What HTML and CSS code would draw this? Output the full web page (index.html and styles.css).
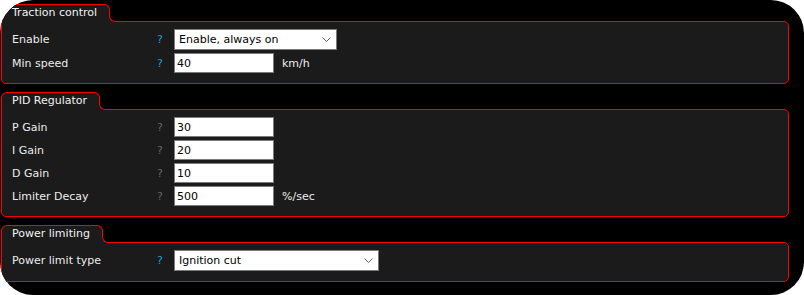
FILE: index.html
```html
<!DOCTYPE html>
<html lang="en">
<head>
  <meta charset="UTF-8">
  <title>Traction control settings</title>
  <link rel="stylesheet" href="styles.css">
</head>
<body>

<div class="frame">

  <div class="panel">
    <div class="panel-tab">Traction control</div>
    <div class="panel-body">
      <div class="row">
        <span class="label">Enable</span>
        <span class="help">?</span>
        <div class="select select-short">
          <span>Enable, always on</span>
          <svg class="chevron" width="9" height="5" viewBox="0 0 9 5"><path d="M0.5 0.5 L4.5 4.5 L8.5 0.5" fill="none" stroke="#5a5a5a" stroke-width="1"/></svg>
        </div>
      </div>
      <div class="row">
        <span class="label">Min speed</span>
        <span class="help">?</span>
        <input type="text" class="field" value="40">
        <span class="unit">km/h</span>
      </div>
    </div>
  </div>

  <div class="panel">
    <div class="panel-tab">PID Regulator</div>
    <div class="panel-body">
      <div class="row">
        <span class="label">P Gain</span>
        <span class="help help-muted">?</span>
        <input type="text" class="field" value="30">
      </div>
      <div class="row">
        <span class="label">I Gain</span>
        <span class="help help-muted">?</span>
        <input type="text" class="field" value="20">
      </div>
      <div class="row">
        <span class="label">D Gain</span>
        <span class="help help-muted">?</span>
        <input type="text" class="field" value="10">
      </div>
      <div class="row">
        <span class="label">Limiter Decay</span>
        <span class="help help-muted">?</span>
        <input type="text" class="field" value="500">
        <span class="unit">%/sec</span>
      </div>
    </div>
  </div>

  <div class="panel">
    <div class="panel-tab">Power limiting</div>
    <div class="panel-body">
      <div class="row">
        <span class="label">Power limit type</span>
        <span class="help">?</span>
        <div class="select select-long">
          <span>Ignition cut</span>
          <svg class="chevron" width="9" height="5" viewBox="0 0 9 5"><path d="M0.5 0.5 L4.5 4.5 L8.5 0.5" fill="none" stroke="#5a5a5a" stroke-width="1"/></svg>
        </div>
      </div>
    </div>
  </div>

</div>

</body>
</html>
```

FILE: styles.css
```css
body {
  margin: 0;
  background-color: #fff;
  font-family: "DejaVu Sans", Verdana, sans-serif;
  font-size: 11px;
}

.frame {
  width: 804px;
  height: 295px;
  box-sizing: border-box;
  padding: 4px 15px 0 1px;
  background-color: #000;
  border-radius: 33px;
  overflow: hidden;
  display: flex;
  flex-direction: column;
  gap: 8px;
}

.panel {
  display: flex;
  flex-direction: column;
  align-items: flex-start;
}

.panel-tab {
  position: relative;
  z-index: 1;
  height: 17px;
  line-height: 16px;
  padding: 0 12px 0 10px;
  margin-bottom: -1px;
  border: 1px solid #f00;
  border-bottom: none;
  border-radius: 6px 6px 0 0;
  background-color: #1b1b1b;
  color: #f2f2f2;
}

/* concave corner where the tab runs into the panel border */
.panel-tab::before,
.panel-tab::after {
  content: "";
  position: absolute;
  right: -7px;
  bottom: 0;
  width: 7px;
  height: 7px;
  box-sizing: border-box;
}

.panel-tab::before {
  background-color: #1b1b1b;
}

.panel-tab::after {
  background-color: #000;
  border-left: 1px solid #f00;
  border-bottom: 1px solid #f00;
  border-bottom-left-radius: 6px;
}

.panel-body {
  align-self: stretch;
  display: flex;
  flex-direction: column;
  gap: 3px;
  padding: 7px 10px 10px;
  border: 1px solid #f00;
  border-radius: 0 5px 5px 5px;
  background-color: #1b1b1b;
}

.row {
  display: flex;
  align-items: center;
  min-height: 20px;
}

.label {
  width: 145px;
  color: #ececec;
}

.help {
  width: 17px;
  color: #1e9ed2;
}

.help-muted {
  color: #666;
}

.field {
  width: 100px;
  height: 20px;
  box-sizing: border-box;
  margin: 0;
  padding: 0 2px;
  border: 1px solid #7a7a7a;
  background-color: #fff;
  color: #000;
  font-family: inherit;
  font-size: 11px;
  outline: none;
}

.select {
  height: 21px;
  box-sizing: border-box;
  display: flex;
  align-items: center;
  justify-content: space-between;
  padding: 0 5px 0 4px;
  border: 1px solid #7a7a7a;
  background-color: #fff;
  color: #000;
}

.select-short {
  width: 163px;
}

.select-long {
  width: 205px;
}

.chevron {
  display: block;
}

.unit {
  margin-left: 8px;
  color: #ececec;
}
```
